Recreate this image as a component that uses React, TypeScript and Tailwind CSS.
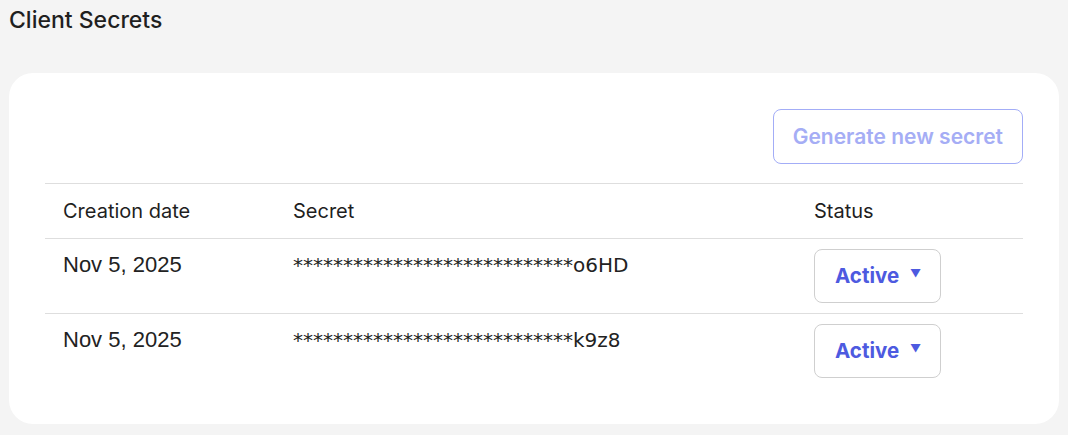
import React from "react";

const rows = [
  { date: "Nov 5, 2025", secret: "****************************o6HD" },
  { date: "Nov 5, 2025", secret: "****************************k9z8" },
];

export default function App() {
  return (
    <div className="min-h-[435px] w-full bg-[#f4f4f4] px-[9px] pt-[4px] pb-[11px]" style={{ fontFamily: "Inter, 'Noto Sans', sans-serif" }}>
      <h1 className="text-[23px] leading-[32px] font-medium text-[#1f1f1f]">Client Secrets</h1>
      <div className="mt-[37px] rounded-[24px] bg-white px-[36px] pt-[36px] pb-[36px]">
        <div className="flex justify-end">
          <button className="h-[55px] rounded-[8px] border border-[#a3adf7] px-[19px] text-[21px] font-semibold text-[#a5adf5]">
            Generate new secret
          </button>
        </div>
        <div className="mt-[19px] border-t border-[#dedede]">
          <div className="grid grid-cols-[230px_521px_1fr] h-[55px] items-center border-b border-[#dedede] text-[20px] text-[#1f1f1f]">
            <div className="pl-[18px]">Creation date</div>
            <div className="pl-[18px]">Secret</div>
            <div className="pl-[18px]">Status</div>
          </div>
          {rows.map((r, i) => (
            <div key={i} className={`grid grid-cols-[230px_521px_1fr] items-start ${i === 0 ? "border-b border-[#dedede]" : ""}`}>
              <div className="pl-[18px] pt-[12px] text-[22px] leading-[28px] text-[#222]" style={{ fontFamily: "'Liberation Sans', Arial, sans-serif" }}>
                {r.date}
              </div>
              <div className="pl-[18px] pt-[13px] text-[20px] leading-[26px] text-[#222]" style={{ fontFamily: "'DejaVu Sans', sans-serif" }}>
                {r.secret}
              </div>
              <div className="pl-[18px] py-[10px]">
                <div className="inline-flex h-[54px] w-[127px] items-center rounded-[8px] border border-[#cfcfcf] pl-[20px] pr-[19px]">
                  <span className="text-[20.5px] font-bold text-[#4d5ae0]">Active</span>
                  <span className="ml-auto text-[11px] text-[#4d5ae0] -mt-[6px]">▼</span>
                </div>
              </div>
            </div>
          ))}
        </div>
      </div>
    </div>
  );
}
